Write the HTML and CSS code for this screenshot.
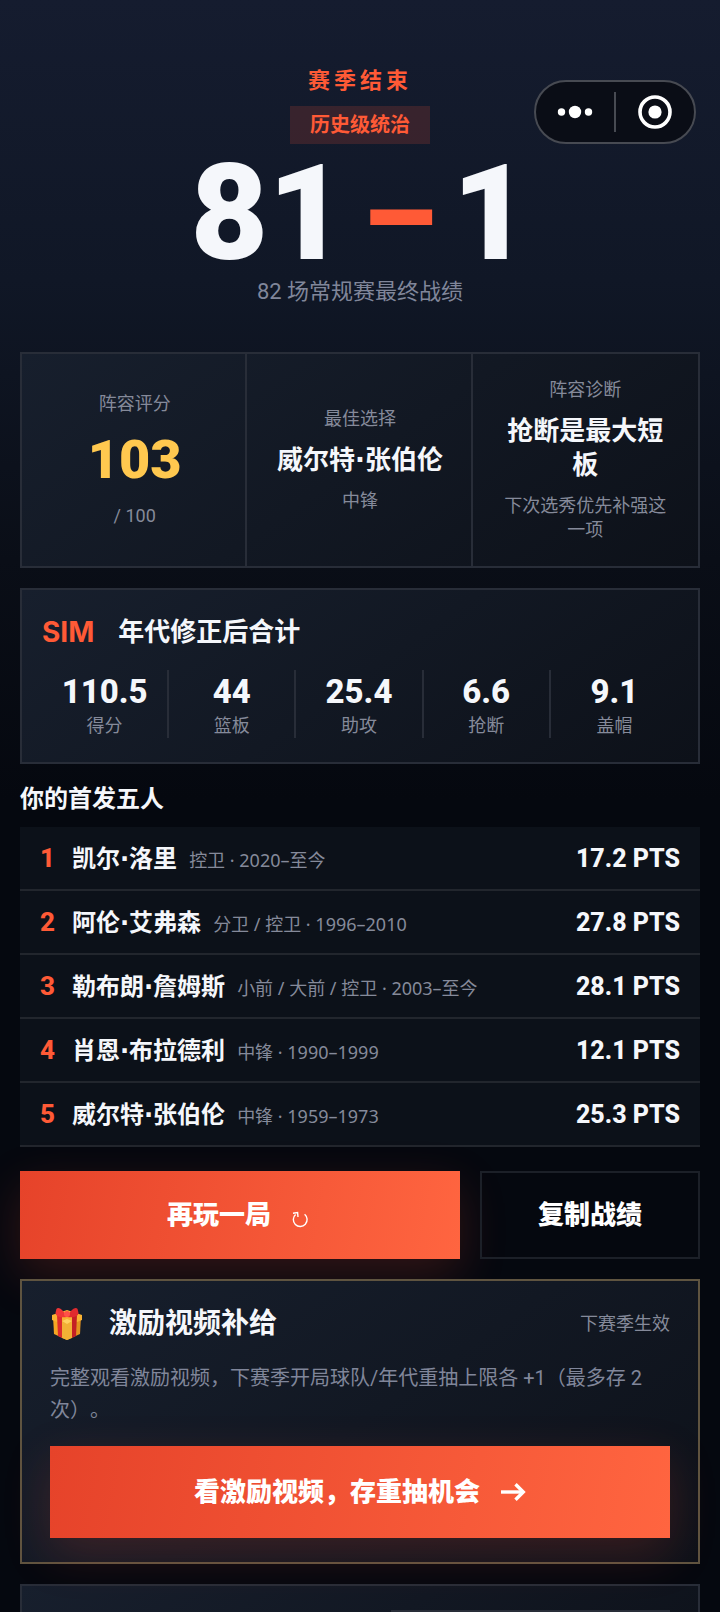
FILE: index.html
```html
<!DOCTYPE html>
<html lang="zh-CN">
<head>
  <meta charset="UTF-8">
  <meta name="viewport" content="width=device-width, initial-scale=1.0">
  <title>赛季结束</title>
  <link rel="stylesheet" href="styles.css">
</head>
<body>
  <!-- Mini program menu -->
  <div class="capsule">
    <button class="capsule-btn" type="button" aria-label="更多">
      <svg width="36" height="14" viewBox="0 0 36 14" fill="#fff">
        <circle cx="4.5" cy="7" r="3.7"/>
        <circle cx="18" cy="7" r="6.2"/>
        <circle cx="31.5" cy="7" r="3.7"/>
      </svg>
    </button>
    <span class="capsule-line"></span>
    <button class="capsule-btn" type="button" aria-label="关闭">
      <svg width="36" height="36" viewBox="0 0 36 36">
        <circle cx="18" cy="18" r="15" fill="none" stroke="#fff" stroke-width="3.6"/>
        <circle cx="18" cy="18" r="6.6" fill="#fff"/>
      </svg>
    </button>
  </div>

  <main class="page">
    <header class="hero">
      <div class="hero-label">赛季结束</div>
      <div class="hero-badge">历史级统治</div>
      <h1 class="score"><span>81</span><span class="score-dash">–</span><span>1</span></h1>
      <p class="hero-sub">82 场常规赛最终战绩</p>
    </header>

    <section class="card summary">
      <div class="summary-cell">
        <div class="label">阵容评分</div>
        <div class="rating">103</div>
        <div class="label">/ 100</div>
      </div>
      <div class="summary-cell">
        <div class="label">最佳选择</div>
        <div class="summary-value">威尔特·张伯伦</div>
        <div class="label">中锋</div>
      </div>
      <div class="summary-cell">
        <div class="label">阵容诊断</div>
        <div class="summary-value">抢断是最大短板</div>
        <div class="label">下次选秀优先补强这一项</div>
      </div>
    </section>

    <section class="card sim">
      <h2 class="sim-title"><span class="sim-tag">SIM</span>年代修正后合计</h2>
      <div class="totals">
        <div class="total"><strong>110.5</strong><span class="label">得分</span></div>
        <div class="total"><strong>44</strong><span class="label">篮板</span></div>
        <div class="total"><strong>25.4</strong><span class="label">助攻</span></div>
        <div class="total"><strong>6.6</strong><span class="label">抢断</span></div>
        <div class="total"><strong>9.1</strong><span class="label">盖帽</span></div>
      </div>
    </section>

    <h2 class="section-title">你的首发五人</h2>
    <ol class="roster">
      <li class="player">
        <span class="player-no">1</span>
        <span class="player-name">凯尔·洛里</span>
        <span class="player-meta">控卫 · 2020–至今</span>
        <span class="player-pts">17.2 PTS</span>
      </li>
      <li class="player">
        <span class="player-no">2</span>
        <span class="player-name">阿伦·艾弗森</span>
        <span class="player-meta">分卫 / 控卫 · 1996–2010</span>
        <span class="player-pts">27.8 PTS</span>
      </li>
      <li class="player">
        <span class="player-no">3</span>
        <span class="player-name">勒布朗·詹姆斯</span>
        <span class="player-meta">小前 / 大前 / 控卫 · 2003–至今</span>
        <span class="player-pts">28.1 PTS</span>
      </li>
      <li class="player">
        <span class="player-no">4</span>
        <span class="player-name">肖恩·布拉德利</span>
        <span class="player-meta">中锋 · 1990–1999</span>
        <span class="player-pts">12.1 PTS</span>
      </li>
      <li class="player">
        <span class="player-no">5</span>
        <span class="player-name">威尔特·张伯伦</span>
        <span class="player-meta">中锋 · 1959–1973</span>
        <span class="player-pts">25.3 PTS</span>
      </li>
    </ol>

    <div class="actions">
      <button class="btn btn-primary" type="button">
        再玩一局
        <svg width="26" height="26" viewBox="0 0 26 26" fill="none" stroke="#fff" stroke-width="1.4">
          <path d="M17.6 12.2A6.9 6.9 0 1 1 8.6 12.4"/>
          <path d="M6 11.2L10.6 10.6L11 15"/>
        </svg>
      </button>
      <button class="btn btn-ghost" type="button">复制战绩</button>
    </div>

    <section class="card reward">
      <div class="reward-head">
        <svg class="gift" width="34" height="34" viewBox="0 0 34 34">
          <path d="M3 9L17 14V33L4 27Z" fill="#f5a623"/>
          <path d="M31 9L17 14V33L30 27Z" fill="#e3921f"/>
          <path d="M2 8L17 3L32 8V13L17 19L2 13Z" fill="#f9b233"/>
          <path d="M7 8L12 10V31L8 29Z" fill="#dd2c2c"/>
          <path d="M27 8L22 10V31L26 29Z" fill="#c41f24"/>
          <path d="M12 14L17 12L22 14V31L17 33L12 31Z" fill="#f2b035"/>
          <path d="M12 14L17 12L22 14L17 17Z" fill="#ffd060"/>
          <path d="M17 10C12 0 6 -1 6 4C4 9 9 11 17 10Z" fill="#ef3636"/>
          <path d="M17 10C22 0 28 -1 28 4C30 9 25 11 17 10Z" fill="#e02a2e"/>
          <circle cx="17" cy="7" r="3" fill="#ff5148"/>
        </svg>
        <h2 class="reward-title">激励视频补给</h2>
        <span class="label">下赛季生效</span>
      </div>
      <p class="reward-text">完整观看激励视频，下赛季开局球队/年代重抽上限各 +1（最多存 2 次）。</p>
      <button class="btn btn-primary btn-wide" type="button">
        看激励视频，存重抽机会
        <svg width="26" height="26" viewBox="0 0 26 26" fill="none" stroke="#fff" stroke-width="3.4">
          <path d="M1 13H23"/>
          <path d="M15.500 5.200L23.300 13L15.500 20.800"/>
        </svg>
      </button>
    </section>

    <section class="card next">
      <div class="next-box"></div>
    </section>
  </main>
</body>
</html>
```
FILE: styles.css
```css
* {
  box-sizing: border-box;
}

body {
  margin: 0;
  background-color: #05080f;
  color: #f5f7fb;
  font-family: Roboto, "Noto Sans CJK SC", sans-serif;
}

h1, h2, p, ol {
  margin: 0;
  padding: 0;
}

.page {
  height: 100vh;
  overflow: hidden;
  padding: 66px 20px 0;
  background: linear-gradient(180deg, #151c2f 0, #101726 280px, #0a0e17 560px, #05080f 800px);
}

/* capsule */
.capsule {
  position: absolute;
  top: 80px;
  right: 24px;
  display: flex;
  align-items: center;
  width: 162px;
  height: 64px;
  border: 2px solid #474a52;
  border-radius: 32px;
  background: #0a0d16;
}

.capsule-btn {
  flex: 1;
  display: flex;
  align-items: center;
  justify-content: center;
  padding: 0;
  border: 0;
  background: none;
}

.capsule-line {
  width: 2px;
  height: 40px;
  background: #474a52;
}

/* hero */
.hero {
  display: flex;
  flex-direction: column;
  align-items: center;
  margin-bottom: 48px;
}

.hero-label {
  margin-bottom: 10px;
  color: #ff5a36;
  font-size: 22px;
  font-weight: 700;
  line-height: 30px;
  letter-spacing: 4px;
}

.hero-badge {
  padding: 0 20px;
  background: rgba(255, 90, 54, 0.16);
  color: #ff5a36;
  font-size: 20px;
  font-weight: 700;
  line-height: 38px;
}

.score {
  display: flex;
  align-items: baseline;
  gap: 16px;
  height: 136px;
  padding-top: 4px;
  font-size: 134px;
  font-weight: 900;
  line-height: 132px;
}

.score-dash {
  color: #ff5a36;
  font-size: 120px;
}

.hero-sub {
  color: #80869a;
  font-size: 22px;
  line-height: 24px;
}

/* cards */
.card {
  border: 2px solid #282d38;
  background: linear-gradient(145deg, #171f2d, #0d1119);
}

.label {
  color: #858a9a;
  font-size: 18px;
  line-height: 24px;
}

.summary {
  display: grid;
  grid-template-columns: repeat(3, 1fr);
  margin-bottom: 20px;
}

.summary-cell {
  display: flex;
  flex-direction: column;
  justify-content: center;
  gap: 12px;
  padding: 24px;
  text-align: center;
}

.summary-cell:not(:last-child) {
  padding-right: 22px;
  border-right: 2px solid #282d38;
}

.summary-value {
  font-family: "DejaVu Sans", "Noto Sans CJK SC", sans-serif;
  font-size: 26px;
  font-weight: 700;
  line-height: 34px;
}

.rating {
  color: #ffc84f;
  font-size: 54px;
  font-weight: 900;
  line-height: 64px;
}

/* totals */
.sim {
  padding: 24px 20px;
}

.sim-title {
  display: flex;
  gap: 24px;
  margin-bottom: 20px;
  font-size: 26px;
  font-weight: 700;
  line-height: 36px;
}

.sim-tag {
  color: #ff5a36;
  font-family: Inter, sans-serif;
  font-size: 28px;
}

.totals {
  display: grid;
  grid-template-columns: repeat(5, 1fr);
}

.total {
  display: flex;
  flex-direction: column;
  align-items: center;
  height: 68px;
}

.total:not(:last-child) {
  border-right: 2px solid #282d38;
}

.total strong {
  font-size: 33px;
  font-weight: 800;
  line-height: 44px;
}

/* roster */
.section-title {
  margin: 19px 0 12px;
  font-size: 24px;
  line-height: 32px;
}

.roster {
  margin-bottom: 24px;
  list-style: none;
}

.player {
  display: flex;
  align-items: baseline;
  height: 64px;
  padding: 0 20px;
  border-bottom: 2px solid #22262d;
  background: #0c1119;
  line-height: 62px;
}

.player-no {
  width: 32px;
  color: #ff5a36;
  font-size: 26px;
  font-weight: 800;
}

.player-name {
  margin-right: 12px;
  font-family: "DejaVu Sans", "Noto Sans CJK SC", sans-serif;
  font-size: 24px;
  font-weight: 700;
}

.player-meta {
  color: #858a9a;
  font-family: "Noto Sans", "Noto Sans CJK SC", sans-serif;
  font-size: 18px;
}

.player-pts {
  margin-left: auto;
  font-size: 25px;
  font-weight: 800;
}

/* buttons */
.actions {
  display: grid;
  grid-template-columns: 2fr 1fr;
  gap: 20px;
  margin-bottom: 20px;
}

.btn {
  display: flex;
  align-items: center;
  justify-content: center;
  gap: 16px;
  height: 88px;
  border: 0;
  color: #fff;
  font-family: inherit;
  font-size: 26px;
  font-weight: 900;
  line-height: 34px;
}

.btn-primary {
  background: linear-gradient(100deg, #e6432a, #ff6540);
  box-shadow: 0 16px 48px rgba(255, 80, 50, 0.18);
}

.btn-ghost {
  border: 2px solid #1c2028;
  background: transparent;
}

.btn-wide {
  gap: 20px;
  width: 100%;
  height: 92px;
}

/* reward */
.reward {
  position: relative;
  margin-bottom: 20px;
  padding: 24px 28px;
  border-color: #5f5440;
}

.reward-head {
  display: flex;
  align-items: center;
  height: 37px;
  margin-bottom: 20px;
}

.gift {
  margin-right: 25px;
}

.reward-title {
  flex: 1;
  font-size: 28px;
  line-height: 36px;
}

.reward-text {
  margin-bottom: 20px;
  color: #80869a;
  font-size: 20px;
  line-height: 32px;
  text-spacing-trim: space-all;
}

.next {
  padding: 24px 28px;
}

.next-box {
  width: 45%;
  height: 64px;
  margin-left: auto;
  border: 2px solid #282d38;
}
```
